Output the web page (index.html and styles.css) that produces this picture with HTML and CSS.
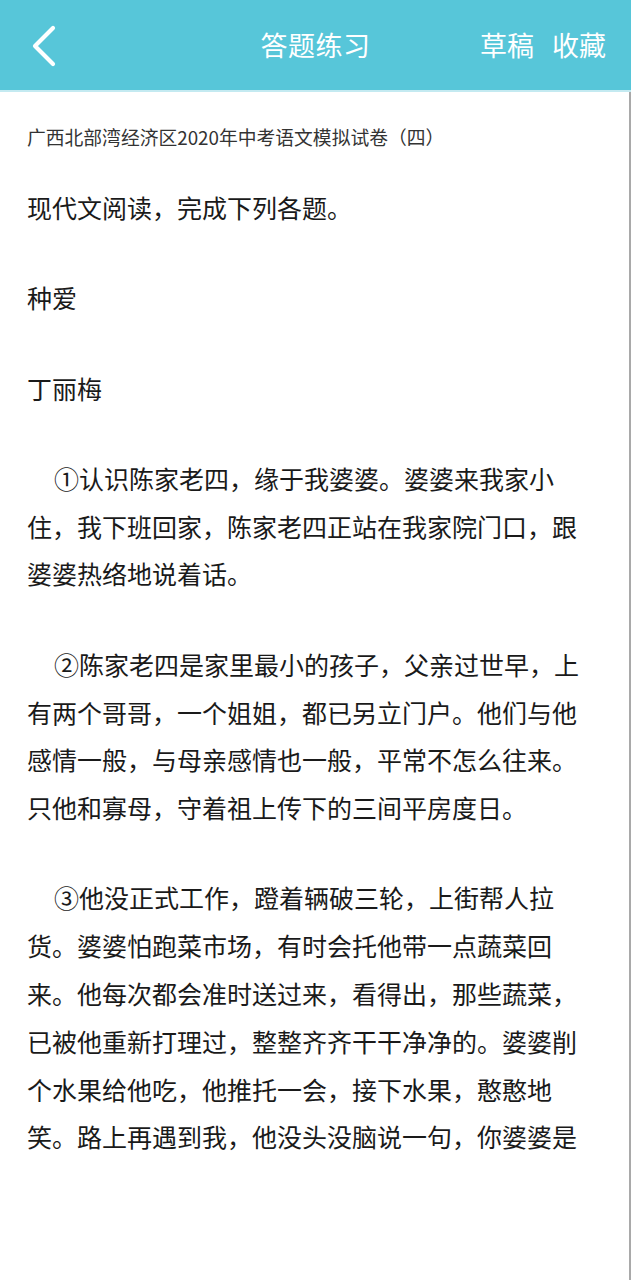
FILE: index.html
```html
<!DOCTYPE html>
<html lang="zh-CN">
<head>
<meta charset="utf-8">
<title>答题练习</title>
<link rel="stylesheet" href="styles.css">
</head>
<body>
<header class="topbar">
  <div class="topbar-left">
    <svg class="back-icon" width="26" height="42" viewBox="0 0 26 42" aria-hidden="true">
      <polyline points="21,3 3,21 21,39" fill="none" stroke="#ffffff" stroke-width="4.2" stroke-linecap="round" stroke-linejoin="round"/>
    </svg>
  </div>
  <div class="topbar-title">答题练习</div>
  <div class="topbar-actions">
    <span class="action">草稿</span>
    <span class="action">收藏</span>
  </div>
</header>
<main class="content">
  <div class="paper-title">广西北部湾经济区2020年中考语文模拟试卷（四）</div>
  <article class="article">
    <p>现代文阅读，完成下列各题。</p>
    <p>种爱</p>
    <p>丁丽梅</p>
    <p class="indent">①认识陈家老四，缘于我婆婆。婆婆来我家小住，我下班回家，陈家老四正站在我家院门口，跟婆婆热络地说着话。</p>
    <p class="indent">②陈家老四是家里最小的孩子，父亲过世早，上有两个哥哥，一个姐姐，都已另立门户。他们与他感情一般，与母亲感情也一般，平常不怎么往来。只他和寡母，守着祖上传下的三间平房度日。</p>
    <p class="indent">③他没正式工作，蹬着辆破三轮，上街帮人拉货。婆婆怕跑菜市场，有时会托他带一点蔬菜回来。他每次都会准时送过来，看得出，那些蔬菜，已被他重新打理过，整整齐齐干干净净的。婆婆削个水果给他吃，他推托一会，接下水果，憨憨地笑。路上再遇到我，他没头没脑说一句，你婆婆是</p>
  </article>
</main>
</body>
</html>
```

FILE: styles.css
```css
html, body {
  margin: 0;
  padding: 0;
  background: #ffffff;
}

body {
  font-family: "Noto Sans CJK SC", "Noto Sans", sans-serif;
  color: #1c1c1c;
  width: 631px;
  min-height: 1280px;
  overflow: hidden;
}

.topbar {
  height: 90px;
  background: #57c6d9;
  border-bottom: 2px solid #c4eaf1;
  display: grid;
  grid-template-columns: 1fr auto 1fr;
  align-items: center;
  color: #ffffff;
}

.topbar-left {
  display: flex;
  align-items: center;
  padding-left: 32px;
}

.back-icon {
  display: block;
  margin-top: 1px;
}

.topbar-title {
  font-size: 27px;
  line-height: 36px;
  letter-spacing: 0.5px;
}

.topbar-actions {
  display: flex;
  justify-content: flex-end;
  gap: 18px;
  padding-right: 25px;
  font-size: 27px;
  line-height: 36px;
}

.content {
  border-right: 2px solid #a9a9a9;
  min-height: 1188px;
  padding: 33px 42px 0 27px;
}

.paper-title {
  font-size: 18.8px;
  line-height: 24px;
  color: #333333;
}

.article {
  margin-top: 35px;
}

.article p {
  margin: 0 0 42.5px 0;
  font-size: 25px;
  line-height: 47.8px;
  color: #1a1a1a;
}

.article p.indent {
  text-indent: 27px;
}
```
